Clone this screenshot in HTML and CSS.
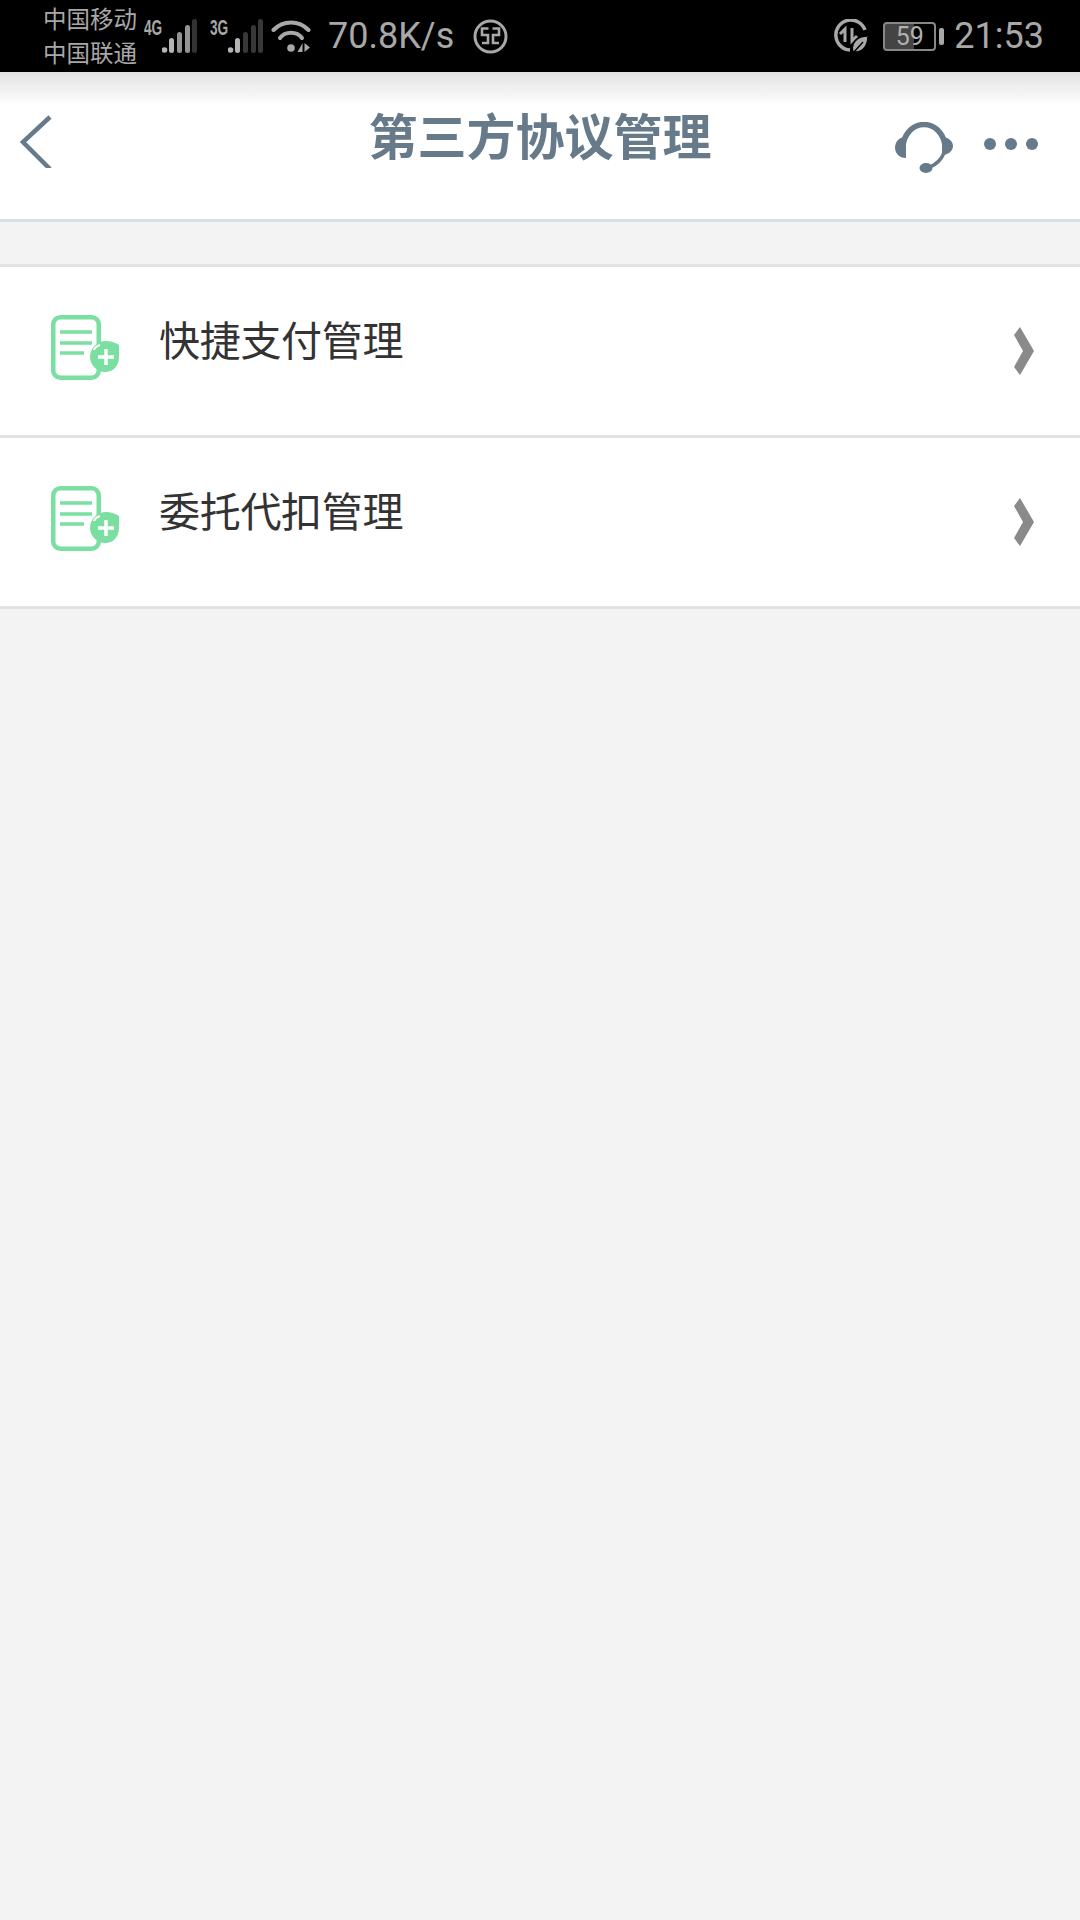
FILE: index.html
```html
<!DOCTYPE html>
<html lang="zh-CN">
<head>
  <meta charset="UTF-8">
  <title>第三方协议管理</title>
  <link rel="stylesheet" href="styles.css">
</head>
<body>
  <div class="status-bar">
    <div class="carriers">
      <span>中国移动</span>
      <span>中国联通</span>
    </div>
    <div class="signal signal-first">
      <span class="net">4G</span>
      <svg width="35" height="34" viewBox="0 0 35 34">
        <circle cx="2.500" cy="31" r="2.800" fill="#b4b4b4"/>
        <rect x="7" y="19" width="5" height="15" rx="2.500" fill="#b4b4b4"/>
        <rect x="15" y="13" width="5" height="21" rx="2.500" fill="#949494"/>
        <rect x="23" y="6" width="5" height="28" rx="2.500" fill="#949494"/>
        <rect x="30" y="0" width="5" height="34" rx="2.500" fill="#333"/>
      </svg>
    </div>
    <div class="signal signal-second">
      <span class="net">3G</span>
      <svg width="35" height="34" viewBox="0 0 35 34">
        <circle cx="2.500" cy="31" r="2.800" fill="#b4b4b4"/>
        <rect x="7" y="19" width="5" height="15" rx="2.500" fill="#b4b4b4"/>
        <rect x="15" y="13" width="5" height="21" rx="2.500" fill="#383838"/>
        <rect x="23" y="6" width="5" height="28" rx="2.500" fill="#383838"/>
        <rect x="30" y="0" width="5" height="34" rx="2.500" fill="#383838"/>
      </svg>
    </div>
    <svg class="wifi" width="40" height="33" viewBox="0 0 40 33" fill="none" stroke="#a8a8a8" stroke-width="4" stroke-linecap="round">
      <path d="M2.500 10C12 0 28 0 37.500 10"/>
      <path d="M9 18C14 11 26 11 31 18"/>
      <circle cx="20" cy="28" r="3.800" fill="#a8a8a8" stroke="none"/>
      <path d="M31.500 23V32H26.500ZM33.500 23V32L39 27.500Z" fill="#a8a8a8" stroke="none"/>
    </svg>
    <span class="speed">70.8K/s</span>
    <svg class="bank" width="35" height="35" viewBox="0 0 35 35" fill="none" stroke="#a8a8a8">
      <circle cx="17.500" cy="17.500" r="15.500" stroke-width="3"/>
      <path d="M15.500 9.500H9V16H15V24H9M19.500 9.500H26V16H20V24H26" stroke-width="2.600"/>
    </svg>
    <div class="status-right">
      <svg width="34" height="34" viewBox="0 0 34 34" fill="none">
        <path d="M31 11A15 15 0 1 0 16 31" stroke="#a8a8a8" stroke-width="3.500"/>
        <path d="M6 15L11 10V23M18 9V22L23 17" stroke="#a8a8a8" stroke-width="3"/>
        <path d="M19 33C16 24 23 17 34 17C34 28 28 34 19 33Z" fill="#a8a8a8" stroke="#000" stroke-width="1.500"/>
        <path d="M20 33L29 23" stroke="#000" stroke-width="1.500"/>
      </svg>
      <div class="battery"><span>59</span></div>
      <div class="battery-nub"></div>
      <span class="clock">21:53</span>
    </div>
  </div>

  <div class="header">
    <div class="header-left">
      <svg width="32" height="53" viewBox="0 0 32 53" fill="none" stroke="#667a8a" stroke-width="4.500">
        <path d="M30 2L3 27L30 54"/>
      </svg>
    </div>
    <h1 class="title">第三方协议管理</h1>
    <div class="header-right">
      <svg class="headset" width="58" height="52" viewBox="0 0 58 52">
        <path d="M8 26A21 23.500 0 0 1 50 26" fill="none" stroke="#667a8a" stroke-width="5.500"/>
        <path d="M11 15V36C4 36 0 31 0 25.500C0 20 4 15 11 15Z" fill="#667a8a"/>
        <path d="M47 15V33C53 33 58 29 58 24C58 19 53 15 47 15Z" fill="#667a8a"/>
        <path d="M49 31C46 38 42 42 35 45" fill="none" stroke="#667a8a" stroke-width="3.500"/>
        <ellipse cx="31" cy="46" rx="6.500" ry="5" fill="#667a8a"/>
      </svg>
      <div class="dots">
        <span></span><span></span><span></span>
      </div>
    </div>
  </div>

  <div class="list">
    <div class="row">
      <svg class="doc" width="70" height="70" viewBox="0 0 70 70">
        <rect x="4.250" y="4.250" width="45.500" height="60.500" rx="7" fill="#fff" stroke="#7adfa0" stroke-width="4.500"/>
        <path d="M11 19H43M11 30H43M11 40H35" stroke="#7adfa0" stroke-width="3.500"/>
        <path d="M57 28C62 28 67 30 70 32V44C70 53 64 59 56 59C48 59 41 52 41 44C41 35 48 28 57 28Z" fill="#7adfa0"/>
        <path d="M45 37C46 34 48 33 51 32" fill="none" stroke="#fff" stroke-width="2"/>
        <path d="M57 36V52M49 44H65" stroke="#fff" stroke-width="3.500"/>
      </svg>
      <span class="row-label">快捷支付管理</span>
      <svg class="chevron" width="20" height="48" viewBox="0 0 20 48">
        <path d="M6 0L20 24L6 48L0 40L9 24L0 8Z" fill="#8a8a8a"/>
      </svg>
    </div>
    <div class="row">
      <svg class="doc" width="70" height="70" viewBox="0 0 70 70">
        <rect x="4.250" y="4.250" width="45.500" height="60.500" rx="7" fill="#fff" stroke="#7adfa0" stroke-width="4.500"/>
        <path d="M11 19H43M11 30H43M11 40H35" stroke="#7adfa0" stroke-width="3.500"/>
        <path d="M57 28C62 28 67 30 70 32V44C70 53 64 59 56 59C48 59 41 52 41 44C41 35 48 28 57 28Z" fill="#7adfa0"/>
        <path d="M45 37C46 34 48 33 51 32" fill="none" stroke="#fff" stroke-width="2"/>
        <path d="M57 36V52M49 44H65" stroke="#fff" stroke-width="3.500"/>
      </svg>
      <span class="row-label">委托代扣管理</span>
      <svg class="chevron" width="20" height="48" viewBox="0 0 20 48">
        <path d="M6 0L20 24L6 48L0 40L9 24L0 8Z" fill="#8a8a8a"/>
      </svg>
    </div>
  </div>
</body>
</html>
```

FILE: styles.css
```css
* { box-sizing: border-box; }
html, body {
  height: 100%;
}
body {
  margin: 0;
  background: #f3f3f3;
  font-family: "Noto Sans CJK SC", Roboto, sans-serif;
  overflow: hidden;
}
.status-bar {
  display: flex;
  align-items: center;
  height: 72px;
  padding-left: 43px;
  background: #000;
  color: #a8a8a8;
}
.carriers {
  display: flex;
  flex-direction: column;
  width: 97px;
  margin-top: -2px;
  font-size: 23.5px;
  line-height: 34px;
  white-space: nowrap;
}
.signal {
  display: flex;
  align-items: flex-start;
}
.signal-first { width: 66px; margin-left: 4px; }
.signal-second { width: 61px; }
.net {
  width: 18px;
  font-family: "Liberation Sans", sans-serif;
  font-size: 22px;
  font-weight: bold;
  line-height: 17px;
  transform: scaleX(0.62);
  transform-origin: left;
  white-space: nowrap;
}
.speed {
  margin-left: 17px;
  font-family: Roboto, sans-serif;
  font-size: 36px;
}
.bank { margin-left: 19px; }
.status-right {
  display: flex;
  align-items: center;
  margin-left: auto;
  padding-right: 36px;
}
.battery {
  display: flex;
  align-items: center;
  justify-content: center;
  width: 53px;
  height: 29px;
  margin-left: 15px;
  border: 2px solid #888;
  border-radius: 4px;
  background: linear-gradient(90deg, #444 59%, #000 59%);
  color: #b0b0b0;
  font-family: Roboto, sans-serif;
  font-size: 25px;
}
.battery-nub {
  width: 5px;
  height: 17px;
  margin-left: 3px;
  border-radius: 2px;
  background: #a8a8a8;
}
.clock {
  margin-left: 10px;
  font-family: Roboto, sans-serif;
  font-size: 36px;
}
.header {
  display: grid;
  grid-template-columns: 1fr auto 1fr;
  height: 150px;
  background: linear-gradient(#e3e3e3, #fff 34px);
  border-bottom: 3px solid #d8e0e5;
}
.header-left {
  padding: 43px 0 0 20px;
}
.title {
  margin: 28px 0 0;
  color: #667a8a;
  font-size: 49px;
  font-weight: bold;
  line-height: 68px;
}
.header-right {
  display: flex;
  align-items: flex-start;
  justify-content: flex-end;
  padding-right: 42px;
}
.headset { margin-top: 50px; }
.dots {
  display: flex;
  gap: 9px;
  margin: 66px 0 0 31px;
}
.dots span {
  width: 12px;
  height: 12px;
  border-radius: 50%;
  background: #667a8a;
}
.list {
  margin-top: 42px;
  border-top: 3px solid #e2e2e2;
}
.row {
  display: flex;
  align-items: center;
  height: 171px;
  padding: 0 46px 0 49px;
  background: #fff;
  border-bottom: 3px solid #e2e2e2;
}
.doc {
  margin-top: -6px;
}
.row-label {
  margin: -27px 0 0 40px;
  color: #333;
  font-size: 41px;
  letter-spacing: -0.3px;
}
.chevron {
  margin-left: auto;
}
```
